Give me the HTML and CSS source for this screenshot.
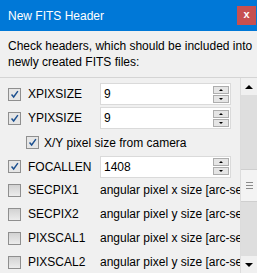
FILE: index.html
```html
<!DOCTYPE html>
<html>
<head>
    <title>New FITS Header</title>
    <meta name="viewport" content="width=device-width, initial-scale=1">
    <link rel="stylesheet" href="styles.css">
</head>
<body>
    <div class="titlebar">
        <span class="title">New FITS Header</span>
        <span class="close">x</span>
    </div>
    <p class="intro">Check headers, which should be included into newly created FITS files:</p>
    <div class="panel">
        <div class="list">
            <div class="row">
                <span class="check on"><svg viewBox="0 0 13 13"><path d="M3 6.5 L5.5 9.5 L10.5 2.5" /></svg></span>
                <span class="key">XPIXSIZE</span>
                <div class="spin"><span class="val">9</span><span class="btns"><span class="up"></span><span class="down"></span></span></div>
            </div>
            <div class="row">
                <span class="check on"><svg viewBox="0 0 13 13"><path d="M3 6.5 L5.5 9.5 L10.5 2.5" /></svg></span>
                <span class="key">YPIXSIZE</span>
                <div class="spin"><span class="val">9</span><span class="btns"><span class="up"></span><span class="down"></span></span></div>
            </div>
            <div class="row sub">
                <span class="check on"><svg viewBox="0 0 13 13"><path d="M3 6.5 L5.5 9.5 L10.5 2.5" /></svg></span>
                <span class="key">X/Y pixel size from camera</span>
            </div>
            <div class="row">
                <span class="check on"><svg viewBox="0 0 13 13"><path d="M3 6.5 L5.5 9.5 L10.5 2.5" /></svg></span>
                <span class="key">FOCALLEN</span>
                <div class="spin"><span class="val">1408</span><span class="btns"><span class="up"></span><span class="down"></span></span></div>
            </div>
            <div class="row">
                <span class="check"></span>
                <span class="key">SECPIX1</span>
                <span class="desc">angular pixel x size [arc-sec]</span>
            </div>
            <div class="row">
                <span class="check"></span>
                <span class="key">SECPIX2</span>
                <span class="desc">angular pixel y size [arc-sec]</span>
            </div>
            <div class="row">
                <span class="check"></span>
                <span class="key">PIXSCAL1</span>
                <span class="desc">angular pixel x size [arc-sec]</span>
            </div>
            <div class="row">
                <span class="check"></span>
                <span class="key">PIXSCAL2</span>
                <span class="desc">angular pixel y size [arc-sec]</span>
            </div>
        </div>
        <div class="scrollbar">
            <div class="sb-btn"><span class="tri-up"></span></div>
            <div class="track">
                <div class="thumb"><span></span><span></span><span></span></div>
            </div>
            <div class="sb-btn"><span class="tri-down"></span></div>
        </div>
    </div>
</body>
</html>
```

FILE: styles.css
```css
html {
	font-family: "Liberation Sans", Arial, sans-serif;
	font-size: 12px;
  }
  body {
	margin: 0;
	width: 257px;
	height: 273px;
	overflow: hidden;
	background-color: #f0f0f0;
	color: #000;
  }
  .titlebar {
	height: 31px;
	background-color: #0078d7;
	display: flex;
	align-items: center;
	justify-content: space-between;
	padding-left: 8px;
	padding-right: 1px;
	box-sizing: border-box;
  }
  .title {
	color: #fff;
	font-size: 12px;
  }
  .close {
	width: 19px;
	height: 19px;
	background-color: #c75050;
	color: #fff;
	font-weight: bold;
	font-size: 11px;
	display: flex;
	align-items: center;
	justify-content: center;
	line-height: 1;
	padding-bottom: 2px;
	box-sizing: border-box;
  }
  .intro {
	margin: 0;
	padding: 7px 4px 0 8px;
	line-height: 16px;
	height: 46px;
	box-sizing: border-box;
	font-size: 12px;
  }
  .panel {
	height: 196px;
	border-top: 1px solid #d4d4d4;
	display: flex;
	box-sizing: border-box;
  }
  .list {
	flex: 1;
	overflow: hidden;
	padding-top: 4px;
  }
  .row {
	height: 24px;
	display: flex;
	align-items: center;
	padding-left: 8px;
	white-space: nowrap;
  }
  .row.sub {
	padding-left: 26px;
	height: 25px;
  }
  .row:nth-child(4) {
	height: 23px;
  }
  .check {
	width: 13px;
	height: 13px;
	box-sizing: border-box;
	border: 1px solid #8f8f8f;
	background: linear-gradient(#d2d2d2, #ececec);
	flex: none;
	margin-right: 7px;
	display: flex;
  }
  .check.on {
	background: #e6e6e6;
  }
  .check svg {
	width: 11px;
	height: 11px;
  }
  .check path {
	fill: none;
	stroke: #1b4f8f;
	stroke-width: 1.7;
  }
  .key {
	width: 72px;
	flex: none;
  }
  .row.sub .key {
	width: auto;
	margin-left: -2px;
  }
  .desc {
	color: #000;
  }
  .spin {
	width: 131px;
	height: 22px;
	background-color: #fff;
	border: 1px solid #dadada;
	box-sizing: border-box;
	display: flex;
	align-items: center;
	justify-content: space-between;
	padding-left: 3px;
	padding-right: 1px;
  }
  .btns {
	display: flex;
	flex-direction: column;
	gap: 1px;
  }
  .btns span {
	width: 16px;
	height: 8px;
	box-sizing: border-box;
	border: 1px solid #adadad;
	background-color: #e5e5e5;
	display: flex;
	align-items: center;
	justify-content: center;
  }
  .btns .up::after {
	content: "";
	border-left: 2px solid transparent;
	border-right: 2px solid transparent;
	border-bottom: 2px solid #000;
  }
  .btns .down::after {
	content: "";
	border-left: 2px solid transparent;
	border-right: 2px solid transparent;
	border-top: 2px solid #000;
  }
  .scrollbar {
	width: 16px;
	flex: none;
	display: flex;
	flex-direction: column;
	background-color: #e8e8e8;
	border-left: 1px solid #dcdcdc;
	box-sizing: content-box;
  }
  .sb-btn {
	height: 17px;
	background-color: #f0f0f0;
	display: flex;
	align-items: center;
	justify-content: center;
	flex: none;
  }
  .tri-up {
	border-left: 4px solid transparent;
	border-right: 4px solid transparent;
	border-bottom: 4px solid #000;
  }
  .tri-down {
	border-left: 4px solid transparent;
	border-right: 4px solid transparent;
	border-top: 4px solid #000;
  }
  .track {
	flex: 1;
	padding-top: 74px;
	background-color: #dedede;
  }
  .thumb {
	height: 33px;
	background-color: #f3f3f3;
	border: 1px solid #cfcfcf;
	border-left: none;
	border-right: none;
	box-sizing: border-box;
	display: flex;
	flex-direction: column;
	align-items: center;
	justify-content: center;
	gap: 2px;
  }
  .thumb span {
	width: 7px;
	height: 1px;
	background-color: #8a8a8a;
  }
```
